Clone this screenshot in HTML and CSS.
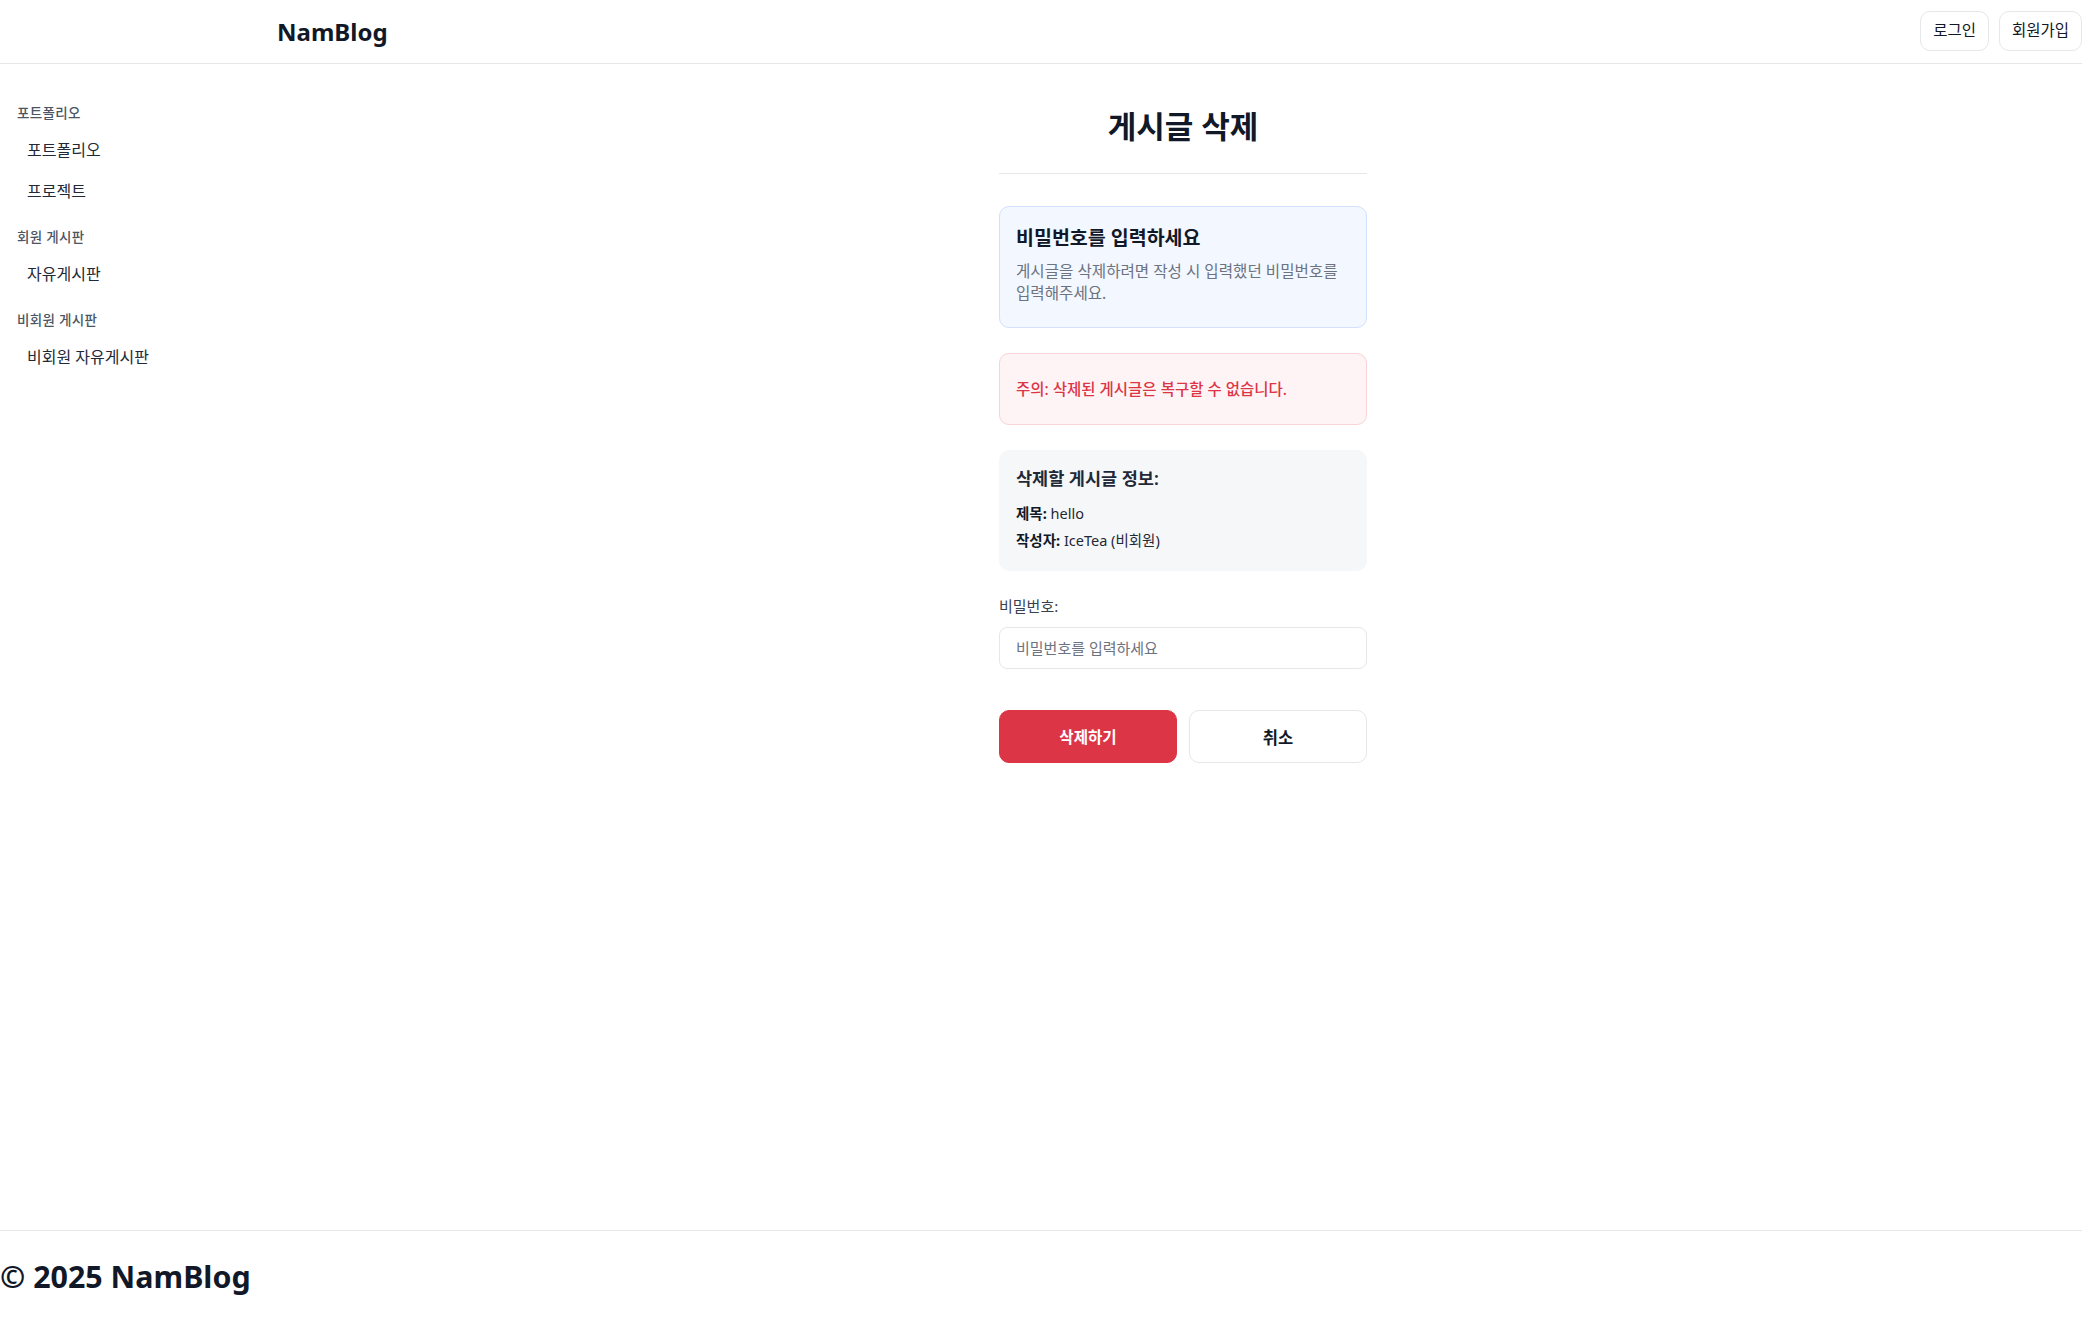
FILE: index.html
```html
<!DOCTYPE html>
<html lang="ko">
<head>
<meta charset="utf-8">
<title>게시글 삭제 - NamBlog</title>
<link rel="stylesheet" href="styles.css">
</head>
<body>
<div class="page">
  <header class="header">
    <div class="brand">NamBlog</div>
    <div class="auth">
      <button class="auth-btn">로그인</button>
      <button class="auth-btn">회원가입</button>
    </div>
  </header>
  <div class="layout">
    <aside class="sidebar">
      <div class="nav-section">
        <div class="nav-label">포트폴리오</div>
        <a class="nav-item">포트폴리오</a>
        <a class="nav-item">프로젝트</a>
      </div>
      <div class="nav-section">
        <div class="nav-label">회원 게시판</div>
        <a class="nav-item">자유게시판</a>
      </div>
      <div class="nav-section">
        <div class="nav-label">비회원 게시판</div>
        <a class="nav-item">비회원 자유게시판</a>
      </div>
    </aside>
    <main class="main">
      <div class="container">
        <h1 class="title">게시글 삭제</h1>
        <div class="card card-info">
          <h2 class="card-heading">비밀번호를 입력하세요</h2>
          <p class="card-desc">게시글을 삭제하려면 작성 시 입력했던 비밀번호를 입력해주세요.</p>
        </div>
        <div class="card card-warn">
          <p class="warn-text">주의: 삭제된 게시글은 복구할 수 없습니다.</p>
        </div>
        <div class="card card-post">
          <h3 class="post-heading">삭제할 게시글 정보:</h3>
          <p class="post-line"><strong>제목:</strong> hello</p>
          <p class="post-line"><strong>작성자:</strong> IceTea (비회원)</p>
        </div>
        <div class="form-group">
          <label class="form-label" for="pw">비밀번호:</label>
          <input class="form-input" id="pw" type="password" placeholder="비밀번호를 입력하세요">
        </div>
        <div class="actions">
          <button class="btn btn-delete">삭제하기</button>
          <button class="btn btn-cancel">취소</button>
        </div>
      </div>
    </main>
  </div>
  <footer class="footer">
    <div class="footer-text">© 2025 NamBlog</div>
  </footer>
</div>
</body>
</html>
```

FILE: styles.css
```css
* { box-sizing: border-box; }
html, body { margin: 0; padding: 0; }
body {
  font-family: "Noto Sans", "Noto Sans CJK KR", sans-serif;
  color: #111827;
  background: #ffffff;
  word-break: keep-all;
}
.page {
  min-height: 100vh;
  display: flex;
  flex-direction: column;
}
.header {
  height: 64px;
  border-bottom: 1px solid #e5e7eb;
  display: flex;
  align-items: center;
  justify-content: space-between;
  padding-left: 277px;
}
.brand {
  font-size: 24px;
  font-weight: 700;
  color: #111827;
  line-height: 1;
  margin-top: 1px;
}
.auth {
  display: flex;
  gap: 10px;
  margin-top: -1px;
}
.auth-btn {
  font-family: inherit;
  font-size: 15.5px;
  color: #111827;
  background: #fff;
  border: 1px solid #e5e7eb;
  border-radius: 10px;
  height: 40px;
  padding: 0 12px;
  line-height: 1;
}
.layout {
  flex: 1;
  display: flex;
}
.sidebar {
  width: 284px;
  flex-shrink: 0;
  padding: 39px 16px 0 16px;
}
.nav-section {
  display: flex;
  flex-direction: column;
  margin-bottom: 15px;
}
.nav-label {
  font-size: 13.5px;
  font-weight: 500;
  color: #4b5563;
  line-height: 20px;
  margin-bottom: 7px;
  padding-left: 1px;
  letter-spacing: 0.3px;
}
.nav-item {
  font-size: 16px;
  color: #1f2937;
  line-height: 21px;
  padding: 10px 11px;
}
.main {
  flex: 1;
}
.container {
  width: 368px;
  margin: 0 auto;
  padding-top: 44px;
}
.title {
  margin: 0;
  font-size: 31px;
  font-weight: 700;
  line-height: 36px;
  text-align: center;
  padding-bottom: 29px;
  border-bottom: 1px solid #e5e7eb;
  margin-bottom: 32px;
}
.card {
  border-radius: 10px;
  margin-bottom: 25px;
}
.card-info {
  background: #f3f7ff;
  border: 1px solid #d3e0fa;
  padding: 16px 16px 23px 16px;
}
.card-heading {
  margin: 0 0 8px 0;
  font-size: 19.5px;
  font-weight: 600;
  line-height: 29px;
  color: #111827;
}
.card-desc {
  margin: 0;
  font-size: 15.6px;
  line-height: 22px;
  color: #6b7280;
}
.card-warn {
  background: #fff4f5;
  border: 1px solid #f8d3d7;
  padding: 24px 16px;
}
.warn-text {
  margin: 0;
  font-size: 15.5px;
  font-weight: 500;
  line-height: 22px;
  color: #dc3545;
}
.card-post {
  background: #f6f7f9;
  padding: 16px 17px 20px 17px;
}
.post-heading {
  margin: 0 0 13px 0;
  font-size: 17.5px;
  font-weight: 600;
  line-height: 24px;
  color: #1f2937;
}
.post-line {
  margin: 0;
  font-size: 14.5px;
  line-height: 21px;
  color: #1f2937;
}
.post-line + .post-line { margin-top: 6px; }
.post-line strong { font-weight: 700; color: #111827; }
.form-group {
  display: flex;
  flex-direction: column;
}
.form-label {
  font-size: 15px;
  line-height: 21px;
  color: #374151;
  margin-bottom: 10px;
}
.form-input {
  height: 42px;
  border: 1px solid #e5e7eb;
  border-radius: 8px;
  padding: 0 16px;
  font-family: inherit;
  font-size: 15px;
  color: #111827;
  background: #fff;
  outline: none;
}
.form-input::placeholder { color: #6b7280; }
.actions {
  display: flex;
  gap: 12px;
  margin-top: 41px;
}
.btn {
  flex: 1;
  height: 53px;
  border-radius: 10px;
  font-family: inherit;
  font-size: 15.6px;
  font-weight: 700;
}
.btn-delete {
  background: #dc3545;
  color: #ffffff;
  border: 1px solid #dc3545;
}
.btn-cancel {
  background: #ffffff;
  color: #111827;
  border: 1px solid #e5e7eb;
  font-weight: 600;
  font-size: 16.5px;
}
.footer {
  border-top: 1px solid #e5e7eb;
  height: 89px;
  padding-top: 27px;
}
.footer-text {
  font-size: 30.4px;
  font-weight: 700;
  line-height: 37px;
  color: #111827;
}
```
